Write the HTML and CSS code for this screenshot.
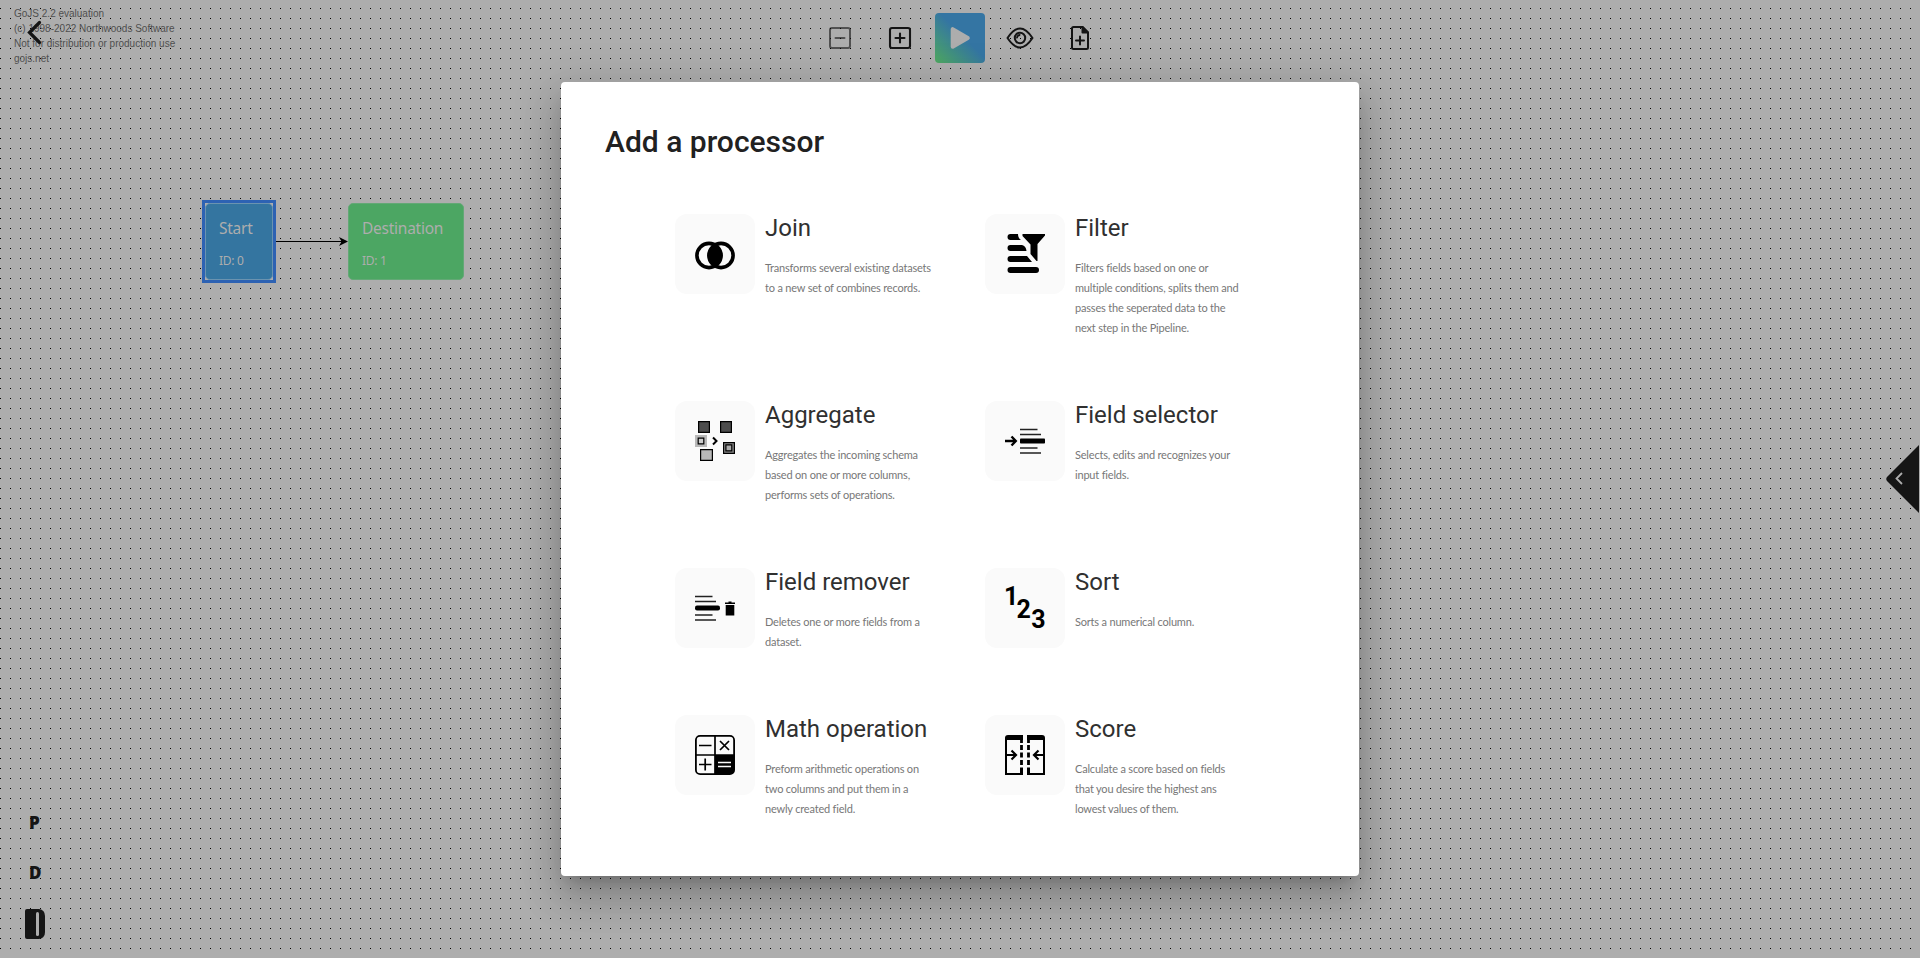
FILE: index.html
```html
<!DOCTYPE html>
<html lang="en">
<head>
<meta charset="utf-8">
<title>Add a processor</title>
<link rel="stylesheet" href="styles.css">
</head>
<body>
<div class="page">
  <div class="diagram">
    <p class="watermark">GoJS 2.2 evaluation<br>(c) 1998-2022 Northwoods Software<br>Not for distribution or production use<br>gojs.net</p>
    <svg class="link" width="80" height="12" viewBox="0 0 80 12"><path d="M0 5.500H66" stroke="#000" stroke-width="1"/><path d="M63 1L72 5.500L63 10L65.500 5.500Z"/></svg>
    <div class="selection"></div>
    <div class="node node-start"><b class="node-name">Start</b><span class="node-id">ID: 0</span></div>
    <div class="node node-dest"><b class="node-name">Destination</b><span class="node-id">ID: 1</span></div>
  </div>
  <svg class="back" width="16" height="26" viewBox="0 0 16 26" fill="none" stroke="#151515" stroke-width="3.200" stroke-linecap="round"><path d="M12.500 2.500L2.500 12.500L12.500 22.500" stroke-linejoin="miter"/></svg>

  <nav class="toolbar">
    <svg class="tool faded" viewBox="0 0 50 50" fill="none" stroke="#151515" stroke-width="2" stroke-linecap="round"><rect x="15" y="15" width="20" height="20" rx="2"/><path d="M20.500 25H29.500"/></svg>
    <svg class="tool" viewBox="0 0 50 50" fill="none" stroke="#151515" stroke-width="2.100" stroke-linecap="round"><rect x="15" y="15" width="20" height="20" rx="2"/><path d="M20.500 25H29.500M25 20.500V29.500"/></svg>
    <div class="tool run"><svg viewBox="0 0 50 50"><path d="M17.700 16.200V33.800L32.800 25Z" fill="#adadad" stroke="#adadad" stroke-width="4" stroke-linejoin="round"/></svg></div>
    <svg class="tool" viewBox="0 0 50 50" fill="none" stroke="#151515" stroke-width="2"><path d="M12.500 25Q25 6 37.500 25Q25 44 12.500 25Z" stroke-linejoin="round"/><circle cx="25" cy="25" r="5.200"/><path d="M22 25.300A3 3 0 0 1 25.300 22" stroke-width="1.800"/></svg>
    <svg class="tool" viewBox="0 0 50 50" fill="none" stroke="#151515" stroke-width="2" stroke-linejoin="round" stroke-linecap="round"><path d="M27.500 14H18.500Q17 14 17 15.500V34.500Q17 36 18.500 36H31.500Q33 36 33 34.500V19.500Z"/><path d="M27.500 14V19.500H33Z" fill="#151515"/><path d="M21 27.500H29M25 23.500V31.500"/></svg>
  </nav>

  <svg class="drawer" width="34" height="68" viewBox="0 0 34 68"><path d="M33 0V68L1 36Q-.500 34 1 32Z" fill="#151515"/><path d="M16 28L10.500 33.500L16 39" fill="none" stroke="#adadad" stroke-width="1.800"/></svg>

  <aside class="side">
    <span>P</span>
    <span>D</span>
    <svg width="20" height="30" viewBox="0 0 20 30"><path d="M2 0H14Q20 1 20 7V23Q20 29 14 30H2Q0 30 0 28V2Q0 0 2 0Z" fill="#151515"/><rect x="11" y="3" width="3" height="24" rx="1.500" fill="#adadad"/></svg>
  </aside>

  <main class="dialog">
    <h1>Add a processor</h1>
    <div class="grid">
      <article class="card">
        <div class="tile"><svg viewBox="0 0 40 40"><g fill="none" stroke="#000" stroke-width="3.600"><circle cx="14" cy="21.500" r="12.100"/><circle cx="26" cy="21.500" r="12.100"/></g><path d="M20 10.500Q27.500 16 27.500 21.500T20 32.500Q12.500 27 12.500 21.500T20 10.500Z"/></svg></div>
        <div class="info"><h2>Join</h2><p>Transforms several existing datasets<br>to a new set of combines records.</p></div>
      </article>
      <article class="card">
        <div class="tile"><svg viewBox="0 0 40 40"><path d="M5.500 0H13Q13 4 16 6H5.500A3 3 0 0 1 5.500 0ZM5.500 11H17Q21 12 21.500 17H5.500A3 3 0 0 1 5.500 11ZM5.500 22H22L27 28H5.500A3 3 0 0 1 5.500 22ZM5.500 33H31A3 3 0 0 1 31 39H5.500A3 3 0 0 1 5.500 33ZM17.500 0H40V1.500L32.500 10V27H31.500L25.500 20V10.500L17.500 2Z"/></svg></div>
        <div class="info"><h2>Filter</h2><p>Filters fields based on one or<br>multiple conditions, splits them and<br>passes the seperated data to the<br>next step in the Pipeline.</p></div>
      </article>
      <article class="card">
        <div class="tile"><svg viewBox="0 0 40 40"><g stroke="#000" stroke-width="1.200"><path d="M3.600.600H14.400V11.400H3.600ZM25.600.600H36.400V11.400H25.600Z" fill="#4d4d4d"/><path d="M5.600 28.600H17.400V39.400H5.600Z" fill="#b8b8b8"/><path d="M28.600 21.600H39.400V32.400H28.600Z" fill="#888"/><path d="M30.900 23.900H36.800V29.800H30.900Z" fill="#aaa"/></g><path d="M0 14H12V26H0Z" fill="#b8b8b8"/><path d="M3.200 17.200H8.800V22.800H3.200Z" fill="#ccc" stroke="#000" stroke-width="1.200"/><path d="M18 16.500L21.500 20L18 23.500" fill="none" stroke="#000" stroke-width="2"/></svg></div>
        <div class="info"><h2>Aggregate</h2><p>Aggregates the incoming schema<br>based on one or more columns,<br>performs sets of operations.</p></div>
      </article>
      <article class="card">
        <div class="tile"><svg viewBox="0 0 40 40"><path d="M0 20H10M6.500 15.500L10.800 20L6.500 24.500" fill="none" stroke="#000" stroke-width="2.400"/><rect x="15" y="17.500" width="25" height="5" rx=".800"/><path d="M15 8.500H32.500M15 13.500H36M15 27H32.500M15 32H36" stroke="#222" stroke-width="1.500"/></svg></div>
        <div class="info"><h2>Field selector</h2><p>Selects, edits and recognizes your<br>input fields.</p></div>
      </article>
      <article class="card">
        <div class="tile"><svg viewBox="0 0 40 40"><rect y="17.500" width="25" height="5" rx="2"/><path d="M0 8.500H17.500M0 13.500H21M0 27H17.500M0 32H21" stroke="#222" stroke-width="1.500"/><path d="M30 14.500H33.500V13.500H36.500V14.500H40V16H30ZM30.700 17H39.300V27.500H30.700Z"/></svg></div>
        <div class="info"><h2>Field remover</h2><p>Deletes one or more fields from a<br>dataset.</p></div>
      </article>
      <article class="card">
        <div class="tile"><svg class="digits" viewBox="0 0 40 40"><text x="-1" y="17">1</text><text x="11.500" y="30">2</text><text x="26.300" y="39.800">3</text></svg></div>
        <div class="info"><h2>Sort</h2><p>Sorts a numerical column.</p></div>
      </article>
      <article class="card">
        <div class="tile"><svg viewBox="0 0 40 40"><rect x=".900" y=".900" width="38.200" height="38.200" rx="4.200" fill="none" stroke="#000" stroke-width="1.800"/><path d="M20 20H39V35Q39 39 35 39H20Z"/><path d="M20 1V39M1 20H39M4 10.500H16.500M4 29.500H16.500M10.200 23.500V35.500M25 6L34 15M34 6L25 15" stroke="#000" stroke-width="1.700"/><path d="M23 27.500H36M23 31.500H36" stroke="#fafafa" stroke-width="1.600"/></svg></div>
        <div class="info"><h2>Math operation</h2><p>Preform arithmetic operations on<br>two columns and put them in a<br>newly created field.</p></div>
      </article>
      <article class="card">
        <div class="tile"><svg viewBox="0 0 40 40"><path d="M3 0H18V5H2V38H15V32.500H18V40H0V3Q0 0 3 0ZM37 0H22V5H38V38H25V32.500H22V40H40V3Q40 0 37 0Z"/><path d="M16.500 3V8M16.500 10V15M16.500 17.500V22.500M16.500 25V30M23.500 3V8M23.500 10V15M23.500 17.500V22.500M23.500 25V30" stroke="#000" stroke-width="2.800"/><path d="M1 20H11M6.500 15.500L11 20L6.500 24.500M39 20H29M33.500 15.500L29 20L33.500 24.500" fill="none" stroke="#000" stroke-width="2.200"/></svg></div>
        <div class="info"><h2>Score</h2><p>Calculate a score based on fields<br>that you desire the highest ans<br>lowest values of them.</p></div>
      </article>
    </div>
  </main>
</div>
</body>
</html>
```
FILE: styles.css
```css
* { box-sizing: border-box; }
body { margin: 0; }
h1, h2, p { margin: 0; }
.page {
  position: relative;
  width: 1920px;
  height: 958px;
  overflow: hidden;
  background: conic-gradient(at 1px 1px, transparent 75%, #000 75%) 0 8px / 10px 10px, #adadad;
  font-family: Roboto, sans-serif;
}
.diagram { position: absolute; inset: 0; }
.watermark {
  position: absolute;
  left: 14px;
  top: 6px;
  font: 10px/15px "Liberation Sans", sans-serif;
  color: #505050;
}
.link { position: absolute; left: 276px; top: 236px; }
.selection { position: absolute; left: 202px; top: 200px; width: 74px; height: 83px; border: 3px solid #2d62b3; background: #adadad; }
.node {
  position: absolute;
  top: 203px;
  height: 77px;
  padding: 14px 13px;
  border-radius: 5px;
  font-family: "Noto Sans", sans-serif;
  color: #adadad;
  white-space: nowrap;
  display: flex;
  flex-direction: column;
  gap: 15px;
}
.node-start { left: 205px; width: 68px; background: #3475a0; border: 1px solid #6a93b0; }
.node-dest { left: 348px; width: 116px; background: #4ca663; border: 1px solid #63a876; }
.node-name { font-size: 15.5px; line-height: 20px; font-weight: 400; letter-spacing: -.25px; }
.node-id { font-size: 12px; line-height: 16px; letter-spacing: -.3px; }
.back { position: absolute; left: 27px; top: 20px; }
.toolbar { position: absolute; left: 815px; top: 13px; display: flex; gap: 10px; }
.tool { display: block; width: 50px; height: 50px; }
.tool svg { display: block; }
.faded { opacity: .6; }
.run { border-radius: 4px; background: linear-gradient(45deg, #4ca663 3%, #3475a3 55%); }
.drawer { position: absolute; left: 1886px; top: 445px; }
.side {
  position: absolute;
  left: 25px;
  top: 813px;
  display: flex;
  flex-direction: column;
  gap: 30px;
  font: 800 17px/20px "Open Sans", sans-serif;
  color: #151515;
}
.side span { padding-left: 4px; }
.side svg { margin-top: -4px; }
.dialog {
  position: absolute;
  left: 561px;
  top: 82px;
  width: 798px;
  height: 794px;
  padding: 40px 44px;
  border-radius: 4px;
  background: #fff;
  box-shadow: 0 11px 15px -7px rgba(0,0,0,.2), 0 24px 38px 3px rgba(0,0,0,.14), 0 9px 46px 8px rgba(0,0,0,.12);
}
.dialog h1 { font-size: 30px; line-height: 40px; font-weight: 500; color: #212121; }
.grid {
  display: grid;
  grid-template-columns: 300px 300px;
  column-gap: 10px;
  row-gap: 63px;
  padding: 52px 0 0 70px;
}
.card { display: flex; gap: 10px; align-items: flex-start; }
.tile { width: 80px; height: 80px; padding: 20px; border-radius: 12px; background: #fafafa; flex: none; }
.tile svg { display: block; width: 40px; height: 40px; overflow: visible; }
.digits text { font: 700 25px Roboto, sans-serif; }
.info { white-space: nowrap; }
.info h2 { font-size: 24px; line-height: 28px; font-weight: 400; color: #303030; padding-bottom: 16px; }
.info p { font: 400 11px/20px Lato, sans-serif; letter-spacing: -.19px; color: #777; }
```
